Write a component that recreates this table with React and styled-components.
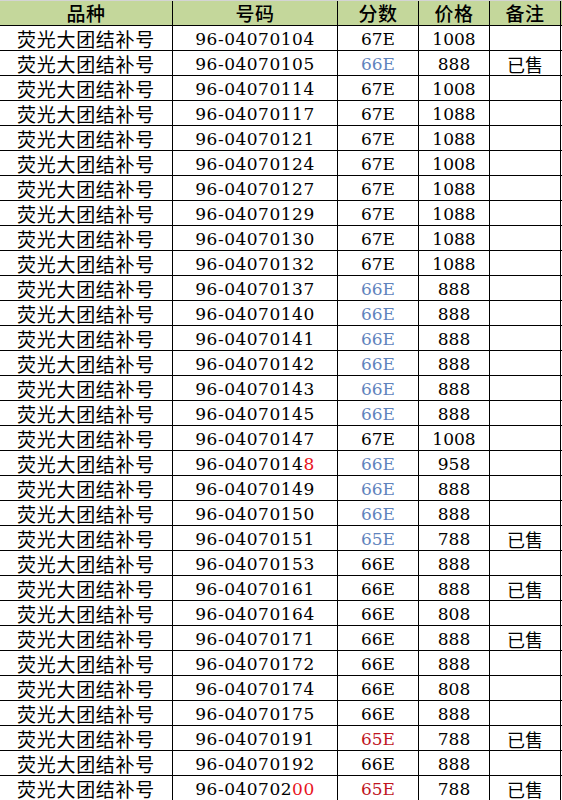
import React from "react";
import styled, { createGlobalStyle } from "styled-components";

const Global = createGlobalStyle`
  html, body { margin: 0; padding: 0; background: #ffffff; }
  body { font-family: "DejaVu Serif", "Noto Sans CJK SC", serif; }
`;

const Sheet = styled.div`
  width: 562px;
  border-top: 1px solid #d4d4d4;
  box-sizing: border-box;
`;

const Row = styled.div`
  display: grid;
  grid-template-columns: 173px 165px 81px 71px 71px;
  box-sizing: border-box;
  height: 25px;
  background: ${(p) => (p.$header ? "#c4d79b" : "#ffffff")};
  border-bottom: 1px solid #000;
`;

const Cell = styled.div`
  box-sizing: border-box;
  border-right: 1px solid #000;
  display: flex;
  align-items: center;
  justify-content: center;
  white-space: nowrap;
  color: #000;
`;

const HeadText = styled.span`
  font-family: "Noto Sans CJK SC", sans-serif;
  font-size: 19px;
  font-weight: 500;
  line-height: 20px;
  letter-spacing: 0.5px;
`;

const NameText = styled.span`
  font-family: "Noto Sans CJK SC", sans-serif;
  font-size: 19px;
  line-height: 22px;
  letter-spacing: 0.7px;
  padding-top: 1px;
`;

const NoteText = styled.span`
  font-family: "Noto Sans CJK SC", sans-serif;
  font-size: 18px;
  line-height: 22px;
  padding-top: 1px;
`;

const NumText = styled.span`
  font-family: "DejaVu Serif", serif;
  font-size: 17px;
  line-height: 22px;
  letter-spacing: ${(p) => (p.$wide ? "0.5px" : "0")};
  padding-top: 2px;
  color: ${(p) => p.$tone || "#000"};
`;

const Mark = styled.span`
  color: #e8141e;
`;

const BLUE = "#5f83bd";
const DARKRED = "#c0151f";

const rows = [
  ["104", "67E", "1008", ""],
  ["105", "66E", "888", "已售", BLUE],
  ["114", "67E", "1008", ""],
  ["117", "67E", "1088", ""],
  ["121", "67E", "1088", ""],
  ["124", "67E", "1008", ""],
  ["127", "67E", "1088", ""],
  ["129", "67E", "1088", ""],
  ["130", "67E", "1088", ""],
  ["132", "67E", "1088", ""],
  ["137", "66E", "888", "", BLUE],
  ["140", "66E", "888", "", BLUE],
  ["141", "66E", "888", "", BLUE],
  ["142", "66E", "888", "", BLUE],
  ["143", "66E", "888", "", BLUE],
  ["145", "66E", "888", "", BLUE],
  ["147", "67E", "1008", ""],
  ["148", "66E", "958", "", BLUE, 1],
  ["149", "66E", "888", "", BLUE],
  ["150", "66E", "888", "", BLUE],
  ["151", "65E", "788", "已售", BLUE],
  ["153", "66E", "888", ""],
  ["161", "66E", "888", "已售"],
  ["164", "66E", "808", ""],
  ["171", "66E", "888", "已售"],
  ["172", "66E", "888", ""],
  ["174", "66E", "808", ""],
  ["175", "66E", "888", ""],
  ["191", "65E", "788", "已售", DARKRED],
  ["192", "66E", "888", ""],
  ["200", "65E", "788", "已售", DARKRED, 2],
];

function Code({ tail, red }) {
  const full = "96-04070" + tail;
  if (!red) return <NumText $wide>{full}</NumText>;
  return (
    <NumText $wide>
      {full.slice(0, full.length - red)}
      <Mark>{full.slice(full.length - red)}</Mark>
    </NumText>
  );
}

export default function App() {
  return (
    <>
      <Global />
      <Sheet>
        <Row $header>
          <Cell><HeadText>品种</HeadText></Cell>
          <Cell><HeadText>号码</HeadText></Cell>
          <Cell><HeadText>分数</HeadText></Cell>
          <Cell><HeadText>价格</HeadText></Cell>
          <Cell><HeadText>备注</HeadText></Cell>
        </Row>
        {rows.map(([tail, score, price, note, tone, red]) => (
          <Row key={tail}>
            <Cell><NameText>荧光大团结补号</NameText></Cell>
            <Cell><Code tail={tail} red={red} /></Cell>
            <Cell><NumText $tone={tone}>{score}</NumText></Cell>
            <Cell><NumText>{price}</NumText></Cell>
            <Cell><NoteText>{note}</NoteText></Cell>
          </Row>
        ))}
      </Sheet>
    </>
  );
}
